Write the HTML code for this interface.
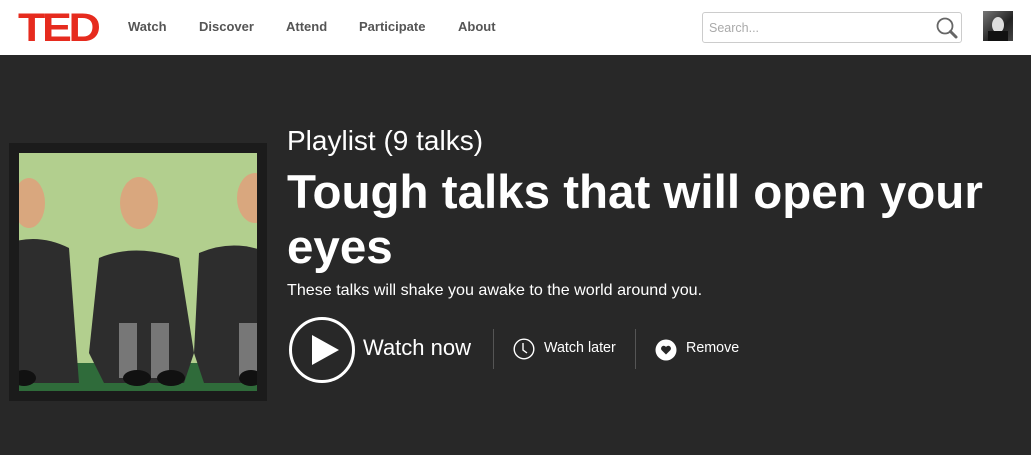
<!DOCTYPE html>
<html><head><meta charset="utf-8"><style>
*{margin:0;padding:0;box-sizing:border-box}
body{width:1031px;height:455px;overflow:hidden;background:#282828;font-family:"Liberation Sans",Helvetica,Arial,sans-serif;position:relative}
.hdr{position:absolute;left:0;top:0;width:1031px;height:55px;background:#fff}
.ted{position:absolute;left:18px;top:6px;font-weight:bold;font-size:40px;color:#e62b1e;letter-spacing:-3px;transform:scaleX(1.12);transform-origin:left}
.nav{position:absolute;top:19px;font-size:13px;font-weight:bold;color:#555}
.search{position:absolute;left:702px;top:12px;width:260px;height:31px;border:1px solid #ccc;border-radius:3px}
.search span{position:absolute;left:6px;top:8px;font-size:12.5px;color:#aaa}
.t{position:absolute;color:#fff;white-space:nowrap}
.sep{position:absolute;top:329px;width:1px;height:40px;background:#555}
</style></head><body>
<div class="hdr">
<div class="ted">TED</div>
<div class="nav" style="left:128px">Watch</div>
<div class="nav" style="left:199px">Discover</div>
<div class="nav" style="left:286px">Attend</div>
<div class="nav" style="left:359px">Participate</div>
<div class="nav" style="left:458px">About</div>
<div class="search"><span>Search...</span>
<svg style="position:absolute;left:232px;top:3px" width="24" height="24" viewBox="0 0 24 24"><circle cx="10" cy="10" r="7.5" fill="none" stroke="#666" stroke-width="1.8"/><line x1="15.5" y1="15.5" x2="21" y2="21" stroke="#666" stroke-width="3" stroke-linecap="round"/></svg></div>
<div style="position:absolute;left:983px;top:11px;width:30px;height:30px;background:linear-gradient(135deg,#777,#222 60%,#444)"><div style="position:absolute;left:9px;top:6px;width:12px;height:16px;border-radius:50%;background:#ddd"></div><div style="position:absolute;left:5px;top:20px;width:20px;height:10px;background:#111"></div></div>
</div>
<div style="position:absolute;left:9px;top:143px;width:258px;height:258px;background:#1b1b1b"></div>
<svg style="position:absolute;left:19px;top:153px" width="238" height="238" viewBox="0 0 238 238">
<rect width="238" height="238" fill="#b2cf8e"/>
<rect y="210" width="238" height="28" fill="#2f6b3a"/>
<g fill="#2d2d2d">
<path d="M-10 90 Q20 80 50 95 L60 230 L-10 230Z"/>
<path d="M80 105 Q115 90 160 105 L175 200 L165 230 L85 230 L70 200Z"/>
<path d="M180 100 Q215 85 250 100 L250 230 L185 230 L175 200Z"/>
</g>
<g fill="#d9a77e"><ellipse cx="120" cy="50" rx="19" ry="26"/><ellipse cx="236" cy="45" rx="18" ry="25"/><ellipse cx="10" cy="50" rx="16" ry="25"/></g>
<g fill="#777"><rect x="100" y="170" width="18" height="55"/><rect x="132" y="170" width="18" height="55"/><rect x="220" y="170" width="18" height="55"/></g>
<g fill="#111"><ellipse cx="118" cy="225" rx="14" ry="8"/><ellipse cx="152" cy="225" rx="14" ry="8"/><ellipse cx="5" cy="225" rx="12" ry="8"/><ellipse cx="232" cy="225" rx="12" ry="8"/></g>
</svg>
<div class="t" style="left:287px;top:125px;font-size:28px;font-weight:300">Playlist (9 talks)</div>
<div class="t" style="left:287px;top:165px;font-size:47.5px;font-weight:bold;line-height:55px;letter-spacing:0">Tough talks that will open your<br>eyes</div>
<div class="t" style="left:287px;top:281px;font-size:16.1px">These talks will shake you awake to the world around you.</div>
<svg style="position:absolute;left:288px;top:316px" width="68" height="68" viewBox="0 0 68 68"><circle cx="34" cy="34" r="31.5" fill="none" stroke="#fff" stroke-width="3"/><path d="M24 19 L51 34 L24 49Z" fill="#fff"/></svg>
<div class="t" style="left:363px;top:335px;font-size:22px">Watch now</div>
<div class="sep" style="left:493px"></div>
<svg style="position:absolute;left:513px;top:338px" width="22" height="22" viewBox="0 0 22 22"><circle cx="11" cy="11" r="9.8" fill="none" stroke="#fff" stroke-width="1.4"/><path d="M10 5 L10 12 L14 15" fill="none" stroke="#fff" stroke-width="1.4"/></svg>
<div class="t" style="left:544px;top:340px;font-size:14.3px">Watch later</div>
<div class="sep" style="left:635px"></div>
<svg style="position:absolute;left:655px;top:339px" width="22" height="22" viewBox="0 0 22 22"><circle cx="11" cy="11" r="10.5" fill="#fff"/><path d="M11 15.5 L6.5 11 A2.3 2.3 0 0 1 11 8 A2.3 2.3 0 0 1 15.5 11Z" fill="#282828"/></svg>
<div class="t" style="left:686px;top:340px;font-size:14.3px">Remove</div>
</body></html>
